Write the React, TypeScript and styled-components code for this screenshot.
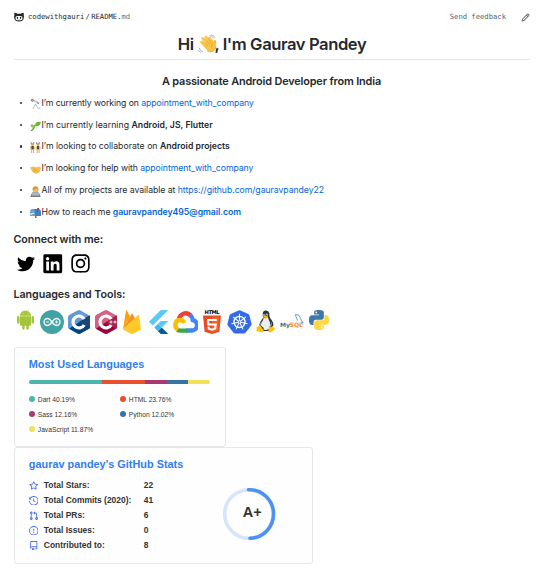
import React from "react";
import styled, { createGlobalStyle } from "styled-components";
import { FaTwitter, FaLinkedin, FaInstagram } from "react-icons/fa";
import { DiAndroid } from "react-icons/di";
import { FcLinux } from "react-icons/fc";

const Global = createGlobalStyle`
  * { box-sizing: border-box; }
  body { margin: 0; background: #fff; color: #24292e; font-family: Inter, "Liberation Sans", sans-serif; }
  svg { display: block; flex: none; }
`;

const Page = styled.main`
  width: 541px;
  height: 576px;
  padding: 10px 11.5px 0 13.5px;
  overflow: hidden;
`;
const TopBar = styled.header`
  display: flex;
  align-items: center;
  height: 14px;
  font: 7.2px/14px "DejaVu Sans Mono", monospace;
`;
const Path = styled.span`
  margin-left: 4.5px;
  flex: 1;
  i { font-style: normal; margin: 0 1.3px; }
  em { font-style: normal; color: #6a737d; }
`;
const Feedback = styled.span`
  color: #586069;
  margin-right: 14.5px;
`;
const Title = styled.h1`
  display: flex;
  justify-content: center;
  align-items: center;
  margin: 0 0 0 1px;
  height: 40px;
  font-size: 16.6px;
  letter-spacing: -0.42px;
  font-weight: 600;
  white-space: pre;
`;
const Wave = styled.span`
  margin: 0 -3.5px 0 0.5px;
`;
const Rule = styled.hr`
  margin: -5px 0 0;
  border: 0;
  height: 1px;
  background: #e4e6e9;
`;
const Tagline = styled.h3`
  margin: 11px 0 0;
  height: 21px;
  line-height: 21px;
  font-size: 10.9px;
  letter-spacing: -0.15px;
  font-weight: 600;
  text-align: center;
`;
const List = styled.ul`
  margin: 0;
  padding: 0 0 0 6.5px;
  list-style: none;
`;
const Item = styled.li`
  display: flex;
  align-items: center;
  height: 21.8px;
  font-size: 8.7px;
  white-space: pre;
  &::before {
    content: "";
    width: 2.4px;
    height: 2.4px;
    margin-right: 7.6px;
    border-radius: 50%;
    background: #24292e;
  }
  b { font-weight: 600; }
  svg { margin: 2px 0 0; }
`;
const Copy = styled.span<{ $track?: number }>`
  margin-left: 0.5px;
  letter-spacing: ${(p) => p.$track ?? 0}px;
`;
const Link = styled.a<{ $bold?: boolean }>`
  color: #0366d6;
  font-weight: ${(p) => (p.$bold ? 600 : 400)};
`;
const Section = styled.h3<{ $top: number }>`
  margin: ${(p) => p.$top}px 0 0;
  height: 16px;
  line-height: 16px;
  font-size: 10.7px;
  letter-spacing: -0.06px;
  font-weight: 600;
`;
const Socials = styled.div`
  display: flex;
  gap: 7.2px;
  height: 22px;
  padding-left: 3px;
  margin-top: 5px;
  align-items: center;
  color: #000;
`;
const Tools = styled.div`
  display: flex;
  gap: 2.7px;
  margin-top: 7px;
  height: 24px;
`;
const Tool = styled.span<{ $lift?: number }>`
  display: flex;
  align-items: center;
  justify-content: center;
  width: 24px;
  height: 24px;
  flex: none;
  margin-top: ${(p) => -(p.$lift ?? 0)}px;
`;
const Card = styled.section<{ $w: number; $h: number }>`
  width: ${(p) => p.$w}px;
  height: ${(p) => p.$h}px;
  padding: 8px 15px 0 14.3px;
  border: 1px solid #e6e7e8;
  border-radius: 3px;
  background: #fffefe;
  font-family: "Liberation Sans", Arial, sans-serif;
`;
const Cards = styled.div`
  margin-top: 13px;
`;
const CardTitle = styled.h4`
  margin: 0;
  height: 16px;
  font-size: 10.9px;
  line-height: 16px;
  font-weight: 700;
  color: #2f80ed;
  white-space: nowrap;
`;
const Bar = styled.div`
  display: flex;
  width: 181px;
  height: 4.5px;
  margin-top: 8px;
  border-radius: 2.5px;
  overflow: hidden;
`;
const Share = styled.span<{ $c: string; $n: number }>`
  flex: ${(p) => p.$n} 0 0;
  background: ${(p) => p.$c};
`;
const Legend = styled.div`
  display: grid;
  grid-template-columns: 91px 90px;
  grid-auto-rows: 15px;
  margin-top: 7.5px;
`;
const Entry = styled.div<{ $c: string }>`
  display: flex;
  align-items: center;
  font-size: 6.7px;
  color: #333;
  &::before {
    content: "";
    width: 6px;
    height: 6px;
    margin-right: 3px;
    border-radius: 50%;
    background: ${(p) => p.$c};
  }
`;
const StatsBody = styled.div`
  display: flex;
  margin-top: 6px;
`;
const Stats = styled.div`
  width: 192.5px;
`;
const Stat = styled.div`
  display: grid;
  grid-template-columns: 15px 100px 1fr;
  align-items: center;
  height: 15px;
  font-size: 8.45px;
  font-weight: 700;
  color: #333;
`;

const octicons = {
  star: "M8 .25a.75.75 0 01.673.418l1.882 3.815 4.21.612a.75.75 0 01.416 1.279l-3.046 2.97.719 4.192a.75.75 0 01-1.088.791L8 12.347l-3.766 1.98a.75.75 0 01-1.088-.79l.72-4.194L.818 6.374a.75.75 0 01.416-1.28l4.21-.611L7.327.668A.75.75 0 018 .25zm0 2.445L6.615 5.5a.75.75 0 01-.564.41l-3.097.45 2.24 2.184a.75.75 0 01.216.664l-.528 3.084 2.769-1.456a.75.75 0 01.698 0l2.77 1.456-.53-3.084a.75.75 0 01.216-.664l2.24-2.183-3.096-.45a.75.75 0 01-.564-.41L8 2.694v.001z",
  commits: "M1.643 3.143L.427 1.927A.25.25 0 000 2.104V5.75c0 .138.112.25.25.25h3.646a.25.25 0 00.177-.427L2.715 4.215a6.5 6.5 0 11-1.18 4.458.75.75 0 10-1.493.154 8.001 8.001 0 101.6-5.684zM7.75 4a.75.75 0 01.75.75v2.992l2.028.812a.75.75 0 01-.557 1.392l-2.5-1A.75.75 0 017 8.25v-3.5A.75.75 0 017.75 4z",
  prs: "M7.177 3.073L9.573.677A.25.25 0 0110 .854v4.792a.25.25 0 01-.427.177L7.177 3.427a.25.25 0 010-.354zM3.75 2.5a.75.75 0 100 1.5.75.75 0 000-1.5zm-2.25.75a2.25 2.25 0 113 2.122v5.256a2.251 2.251 0 11-1.5 0V5.372A2.25 2.25 0 011.5 3.25zM11 2.5h-1V4h1a1 1 0 011 1v5.628a2.251 2.251 0 101.5 0V5A2.5 2.5 0 0011 2.5zm1 10.25a.75.75 0 111.5 0 .75.75 0 01-1.5 0zM3.75 12a.75.75 0 100 1.5.75.75 0 000-1.5z",
  issues: "M8 1.5a6.5 6.5 0 100 13 6.5 6.5 0 000-13zM0 8a8 8 0 1116 0A8 8 0 010 8zm9 3a1 1 0 11-2 0 1 1 0 012 0zm-.25-6.25a.75.75 0 00-1.5 0v3.5a.75.75 0 001.5 0v-3.5z",
  repo: "M2 2.5A2.5 2.5 0 014.5 0h8.75a.75.75 0 01.75.75v12.5a.75.75 0 01-.75.75h-2.5a.75.75 0 110-1.5h1.75v-2h-8a1 1 0 00-.714 1.7.75.75 0 01-1.072 1.05A2.495 2.495 0 012 11.5v-9zm10.5-1V9h-8c-.356 0-.694.074-1 .208V2.5a1 1 0 011-1h8zM5 12.25v3.25a.25.25 0 00.4.2l1.45-1.087a.25.25 0 01.3 0L8.6 15.7a.25.25 0 00.4-.2v-3.25a.25.25 0 00-.25-.25h-3.5a.25.25 0 00-.25.25z",
  pencil: "M11.013 1.427a1.75 1.75 0 012.474 0l1.086 1.086a1.75 1.75 0 010 2.474l-8.61 8.61c-.21.21-.47.364-.756.445l-3.251.93a.75.75 0 01-.927-.928l.929-3.25a1.75 1.75 0 01.445-.758l8.61-8.61zm1.414 1.06a.25.25 0 00-.354 0L10.811 3.75l1.439 1.44 1.263-1.263a.25.25 0 000-.354l-1.086-1.086zM11.189 6.25L9.75 4.81l-6.286 6.287a.25.25 0 00-.064.108l-.558 1.953 1.953-.558a.249.249 0 00.108-.064l6.286-6.286z",
};

const Octicon = ({ name, size, fill }: { name: keyof typeof octicons; size: number; fill: string }) => (
  <svg width={size} height={size} viewBox="0 0 16 16" fill={fill} fillRule="evenodd"><path d={octicons[name]} /></svg>
);

const CatFace = () => (
  <svg width="10" height="10" viewBox="0 0 20 20">
    <path d="M1 1.500q4 0 5.500 2h7q1.500-2 5.500-2 1 3 .5 5.500Q20.500 10 19 14q-1.500 5-9 5t-9-5Q-.5 10 .7 7 0 5 1 1.500z" fill="#24292e" />
    <rect x="3" y="8" width="14" height="8.500" rx="3.500" fill="#fff" />
    <ellipse cx="6.800" cy="11.800" rx="1.400" ry="2.200" fill="#24292e" />
    <ellipse cx="13.200" cy="11.800" rx="1.400" ry="2.200" fill="#24292e" />
    <path d="M9 15h2" stroke="#24292e" />
  </svg>
);

const WavingHand = () => (
  <svg width="20" height="20" viewBox="0 0 20 20">
    <g strokeLinecap="round" strokeWidth="3">
      <path d="M3.600 8.200l7 7M4.700 4.500l8 8.500M8 3.200l7 8M11.500 4.200l4 6" stroke="#fbc84c" />
      <path d="M16.600 7.500v6" stroke="#f5b437" />
    </g>
    <path d="M5 10l9-4.500L18 10q.5 7-4.500 8-3 .5-5.500-3z" fill="#fac545" />
    <path d="M5 7.500l5 5M7.300 5.300l4.500 5M10.500 5l3.500 4.500M15.500 9q-3 2-1.500 5" stroke="#dc942e" strokeWidth=".6" fill="none" />
    <path d="M9 17q6 3 9-4" stroke="#e6a233" strokeWidth=".8" fill="none" />
    <path d="M11.500 1.500q3 .3 4.300 3M13 .600q3 .6 4 3M1 13.500q1 3.500 4 4.500M.5 16q1 2 2.500 2.500" stroke="#a9adb1" strokeWidth=".9" fill="none" />
  </svg>
);

const emojis: Record<string, React.ReactNode> = {
  telescope: (
    <>
      <path d="M1 2l2-1 6.500 3.500-1 1.500z" fill="#c3c6c8" /><path d="M1 2l1.500-.8.8 1.500-1.300.8zM7 4.500l2 1.500" stroke="#50575b" strokeWidth=".7" fill="#d6dadb" />
      <path d="M5.500 6L3 11M5.500 6l3 5" stroke="#8d9194" strokeWidth=".6" />
      <path d="M9 10h1.500" stroke="#8d9194" strokeWidth=".8" />
    </>
  ),
  seedling: (
    <>
      <path d="M1 11Q4 9 5 5" stroke="#68a82f" strokeWidth="1.300" fill="none" />
      <path d="M5 6Q5 1 11 2 10 7 5 6z" fill="#65b934" /><path d="M4.700 7Q3 3 .5 5 1 9 4.700 7z" fill="#8aca45" />
    </>
  ),
  dancers: (
    <>
      {[0, 5.5].map((x) => (
        <g key={x} transform={`translate(${x} 0)`}>
          <path d="M1 .2l.4 2h2l.5-2" stroke="#3d4044" fill="none" strokeWidth=".7" /><circle cx="2.500" cy="2.600" r="1.400" fill="#dca63d" />
          <path d="M1.300 4h2.500v3.500H1.300z" fill="#454950" /><path d="M1.700 7.300v3.700M3.600 7.300v3.700" stroke="#e0ac54" strokeWidth="1" /><path d="M.5 4.500v3M4.600 4.500v3" stroke="#e7b64b" strokeWidth=".8" />
        </g>
      ))}
    </>
  ),
  handshake: (
    <>
      <path d="M0 3.500L3 2.500l3 1 3-1 2 1.500-1.500 4L6.500 10 2.500 8z" fill="#f7bd48" />
      <path d="M5.500 3.500L4 5.500l2 .5 3 2M3 7l2 1.500" stroke="#d6953a" strokeWidth=".6" fill="none" />
    </>
  ),
  technologist: (
    <>
      <circle cx="5.500" cy="3.300" r="3" fill="#d19b46" /><path d="M3.500 3.500q2.500.5 4-1v3.300h-4z" fill="#f5c45d" />
      <path d="M1 10q0-4 4.500-4T10 10z" fill="#5b7fa6" /><path d="M2 6.200h7V10H2z" fill="#aeb3b8" /><path d="M.5 9.600h10V11H.5z" fill="#777d84" />
    </>
  ),
  mailbox: (
    <>
      <path d="M5 8h1.500v3H5z" fill="#9b643c" /><path d="M2.500 2H8q3 0 3 3v4H2.500z" fill="#3f81bd" />
      <path d="M0 5q0-3 2.300-3T5 5v4H0z" fill="#66a9dc" /><path d="M1 5.500h3V8H1z" fill="#21466b" /><path d="M7 6V1h2v2H8v3z" fill="#d9363e" /><path d="M.5 6l3.500-.5v1.800L.5 8z" fill="#eee" />
    </>
  ),
};
const Emoji = ({ name }: { name: string }) => <svg width="11" height="11" viewBox="0 0 11 11">{emojis[name]}</svg>;

const ArduinoLogo = () => (
  <svg width="24" height="24" viewBox="0 0 24 24">
    <circle cx="12" cy="12" r="12" fill="#45a2a4" />
    <path d="M12 12C9.800 8.800 8.600 8.500 7.500 8.500a3.500 3.500 0 000 7c1.100 0 2.300-.3 4.500-3.500s3.400-3.500 4.500-3.500a3.500 3.500 0 010 7c-1.100 0-2.300-.3-4.500-3.500z" fill="none" stroke="#e9f6f6" strokeWidth="1.400" />
    <path d="M6 12h3M15 12h3M16.500 10.500v3" stroke="#fff" strokeWidth=".9" />
  </svg>
);
const HexLogo = ({ tones, plus }: { tones: [string, string, string]; plus?: boolean }) => (
  <svg width="22" height="24" viewBox="0 0 22 24">
    <path d="M11 0q.8 0 1.500.4l8 4.600Q22 5.800 22 7v10q0 1-1 1.800l-8.500 4.800q-1.500.8-3 0L1 18.800Q0 18 0 17V7q0-1.200 1-2L9.500.4Q10.200 0 11 0z" fill={tones[0]} />
    <path d="M21.500 5.500Q22 6 22 7v10q0 1-1 1.800l-8.500 4.800q-1.500.8-3 0L1 18.800z" fill={tones[1]} />
    <path d="M11 12l10.500-6.500Q22 6 22 7v10q0 1-1 1.800z" fill={tones[2]} />
    <path d="M16.200 9a6 6 0 100 6" fill="none" stroke="#fff" strokeWidth="3.200" />
    {plus && <path d="M14.500 12h3M16 10.500v3M18.500 12h3M20 10.500v3" stroke="#fff" strokeWidth=".9" />}
  </svg>
);
const FirebaseLogo = () => (
  <svg width="18" height="24" viewBox="0 0 18 24">
    <path d="M0 19.500L3 .7q.3-1 .9-.1L7 6.500z" fill="#ffa000" /><path d="M0 19.500L8.500 4q.6-.8 1.100 0L12 8.500z" fill="#f5902a" />
    <path d="M0 19.500L15 5q.8-.6 1 .3l2 14.200-8 4.200q-1 .5-2 0z" fill="#ffca28" />
  </svg>
);
const FlutterLogo = () => (
  <svg width="20" height="24" viewBox="0 0 20 24">
    <path d="M11.800 0H19.300L3.800 15.500 0 11.800zM11.800 11H19.300L12.700 17.500 9 13.800z" fill="#5cc8f8" />
    <path d="M9 13.800l3.700 3.700-3.700 3.700-3.800-3.700z" fill="#41b8ee" />
    <path d="M9 21.200l3.700-3.700L19.300 24h-7.500z" fill="#075b9d" />
  </svg>
);
const CloudLogo = () => (
  <svg width="25" height="22" viewBox="0 0 25 22" fill="none" strokeWidth="4.400">
    <path d="M5.500 9.500C7 1.500 14 .5 18 5" stroke="#ea4335" /><path d="M17 4q2.500 2 2.800 5a5.300 5.300 0 01-.8 10.500H13" stroke="#4285f4" />
    <path d="M14 19.600H7.500q-2 0-3.500-1.300" stroke="#34a853" /><path d="M5 18.800C1 16 1.500 9 7 9q3 0 4 3" stroke="#fbbc05" />
  </svg>
);
const HtmlWord = styled.text`
  font: 900 5.2px "DejaVu Sans", sans-serif;
`;
const HtmlLogo = () => (
  <svg width="18" height="24" viewBox="0 0 18 24">
    <HtmlWord x="9" y="4" textAnchor="middle" textLength="15">HTML</HtmlWord>
    <path d="M0 5.500h18l-1.600 16.200L9 24l-7.400-2.300z" fill="#e44d26" /><path d="M9 7h7.300L15 20.500 9 22.300z" fill="#f16529" />
    <path d="M13.800 10H5l.4 4.600h7.300l-.5 4L9 19.700l-3.300-1-.2-2" fill="none" stroke="#fff" strokeWidth="2" />
  </svg>
);
const KubeLogo = () => (
  <svg width="25" height="24" viewBox="0 0 25 24">
    <path d="M11.500.4q1-.5 2 0l7.800 3.700q1 .5 1.200 1.500l2 8.200q.2 1-.5 1.900l-5.300 6.800q-.7.900-1.900.9H8.200q-1.200 0-1.900-.9L1 15.700q-.7-.9-.5-1.900l2-8.200q.2-1 1.200-1.500z" fill="#326ce5" />
    <g stroke="#fff" fill="none"><circle cx="12.500" cy="12" r="5.500" strokeWidth="1.400" />
      {Array.from({ length: 7 }, (_, i) => <path key={i} d="M12.500 10.800V3.800" strokeWidth="1" transform={`rotate(${(i * 360) / 7} 12.500 12)`} />)}
      <circle cx="12.500" cy="12" r="1.200" strokeWidth=".8" /></g>
  </svg>
);
const SqlWord = styled.text`
  font: 700 6px "DejaVu Sans", sans-serif;
`;
const MysqlLogo = () => (
  <svg width="24" height="18" viewBox="0 0 24 18" overflow="visible">
    <SqlWord x="0" y="14" fill="#2f7894">My</SqlWord>
    <SqlWord x="9.600" y="14" fill="#ef8b24">SQL</SqlWord>
    <path d="M15.500 1.500q3.500-1 5.200 4 .5 2.500 2.500 4l-2 .2 1.800 2M15.500 1.500q.2 2 1.300 4l1 2" fill="none" stroke="#3e86a5" strokeWidth=".8" />
  </svg>
);
const snake = "M14.250.18l.9.2.73.26.59.3.45.32.34.34.25.34.16.33.1.3.04.26.02.2-.01.13V8.500l-.05.63-.13.55-.21.46-.26.38-.3.31-.33.25-.35.19-.35.14-.33.1-.3.07-.26.04-.21.02H8.770l-.69.05-.59.14-.5.22-.41.27-.33.32-.27.35-.2.36-.15.37-.1.35-.07.32-.04.27-.02.21v3.060H3.170l-.21-.03-.28-.07-.32-.12-.35-.18-.36-.26-.36-.36-.35-.46-.32-.59-.28-.73-.21-.88-.14-1.050-.05-1.230.06-1.220.16-1.040.24-.87.32-.71.36-.57.4-.44.42-.33.42-.24.4-.16.36-.1.32-.05.24-.01h.16l.06.01h8.160v-.83H6.180l-.01-2.750-.02-.37.05-.34.11-.31.17-.28.25-.26.31-.23.38-.2.44-.18.51-.15.58-.12.64-.1.71-.06.77-.04.84-.02 1.270.05zm-6.300 1.980l-.23.33-.08.41.08.41.23.34.33.22.41.09.41-.09.33-.22.23-.34.08-.41-.08-.41-.23-.33-.33-.22-.41-.09-.41.09z";
const PythonLogo = () => (
  <svg width="20" height="20" viewBox="0 0 24 24">
    <path d={snake} fill="#3c78a9" /><path d={snake} fill="#ffd745" transform="rotate(180 12 12)" />
  </svg>
);
const Ring = () => (
  <svg width="56" height="56" viewBox="0 0 56 56" fill="none" strokeWidth="3.600">
    <circle cx="28" cy="28" r="24.300" stroke="#d5e5fb" />
    <path d="M27.500 3.700a24.300 24.300 0 011.500 48.600" stroke="#4c92f0" strokeLinecap="round" />
  </svg>
);
const RingBox = styled.div`
  display: grid;
  place-items: center;
  height: 56px;
  margin-top: 8px;
  & > * { grid-area: 1 / 1; }
`;
const Grade = styled.span`
  margin: -4px 0 0 6px;
  font-size: 14.5px;
  font-weight: 700;
  color: #333;
`;

const languages = [
  ["Dart", 40.19, "#4db6ac"],
  ["HTML", 23.76, "#e9502f"],
  ["Sass", 12.16, "#a53b70"],
  ["Python", 12.02, "#3572a5"],
  ["JavaScript", 11.87, "#f1e05a"],
] as const;

const stats = [
  ["star", "Total Stars:", 22],
  ["commits", "Total Commits (2020):", 41],
  ["prs", "Total PRs:", 6],
  ["issues", "Total Issues:", 0],
  ["repo", "Contributed to:", 8],
] as const;

export default function App() {
  return (
    <Page>
      <Global />
      <TopBar>
        <CatFace />
        <Path>codewithgauri<i>/</i>README.<em>md</em></Path>
        <Feedback>Send feedback</Feedback>
        <Octicon name="pencil" size={9} fill="#586069" />
      </TopBar>
      <Title>Hi <Wave><WavingHand /></Wave>, I'm Gaurav Pandey</Title>
      <Rule />
      <Tagline>A passionate Android Developer from India</Tagline>
      <List>
        <Item><Emoji name="telescope" /><Copy $track={-0.08}>I’m currently working on <Link>appointment_with_company</Link></Copy></Item>
        <Item><Emoji name="seedling" /><Copy $track={0.03}>I’m currently learning <b>Android, JS, Flutter</b></Copy></Item>
        <Item><Emoji name="dancers" /><Copy $track={0.01}>I’m looking to collaborate on <b>Android projects</b></Copy></Item>
        <Item><Emoji name="handshake" /><Copy $track={-0.06}>I’m looking for help with <Link>appointment_with_company</Link></Copy></Item>
        <Item><Emoji name="technologist" /><Copy $track={-0.05}>All of my projects are available at <Link>https://github.com/gauravpandey22</Link></Copy></Item>
        <Item><Emoji name="mailbox" /><Copy $track={-0.06}>How to reach me <Link $bold>gauravpandey495@gmail.com</Link></Copy></Item>
      </List>
      <Section $top={9}>Connect with me:</Section>
      <Socials>
        <FaTwitter size={18} />
        <FaLinkedin size={21.5} />
        <FaInstagram size={21} />
      </Socials>
      <Section $top={12}>Languages and Tools:</Section>
      <Tools>
        <Tool $lift={2}><DiAndroid size={21} color="#a4c439" /></Tool>
        <Tool><ArduinoLogo /></Tool>
        <Tool><HexLogo tones={["#649ad2", "#004482", "#1a4674"]} /></Tool>
        <Tool><HexLogo tones={["#d26383", "#9c033a", "#a52352"]} plus /></Tool>
        <Tool><FirebaseLogo /></Tool>
        <Tool><FlutterLogo /></Tool>
        <Tool><CloudLogo /></Tool>
        <Tool><HtmlLogo /></Tool>
        <Tool><KubeLogo /></Tool>
        <Tool><FcLinux size={29} /></Tool>
        <Tool><MysqlLogo /></Tool>
        <Tool $lift={2}><PythonLogo /></Tool>
      </Tools>
      <Cards>
        <Card $w={212} $h={100}>
          <CardTitle>Most Used Languages</CardTitle>
          <Bar>{languages.map(([n, v, c]) => <Share key={n} $c={c} $n={v} />)}</Bar>
          <Legend>{languages.map(([n, v, c]) => <Entry key={n} $c={c}>{n} {v}%</Entry>)}</Legend>
        </Card>
        <Card $w={299} $h={117}>
          <CardTitle>gaurav pandey's GitHub Stats</CardTitle>
          <StatsBody>
            <Stats>
              {stats.map(([icon, label, value]) => (
                <Stat key={icon}><Octicon name={icon} size={9.5} fill="#4c71f2" /><span>{label}</span><span>{value}</span></Stat>
              ))}
            </Stats>
            <RingBox><Ring /><Grade>A+</Grade></RingBox>
          </StatsBody>
        </Card>
      </Cards>
    </Page>
  );
}
